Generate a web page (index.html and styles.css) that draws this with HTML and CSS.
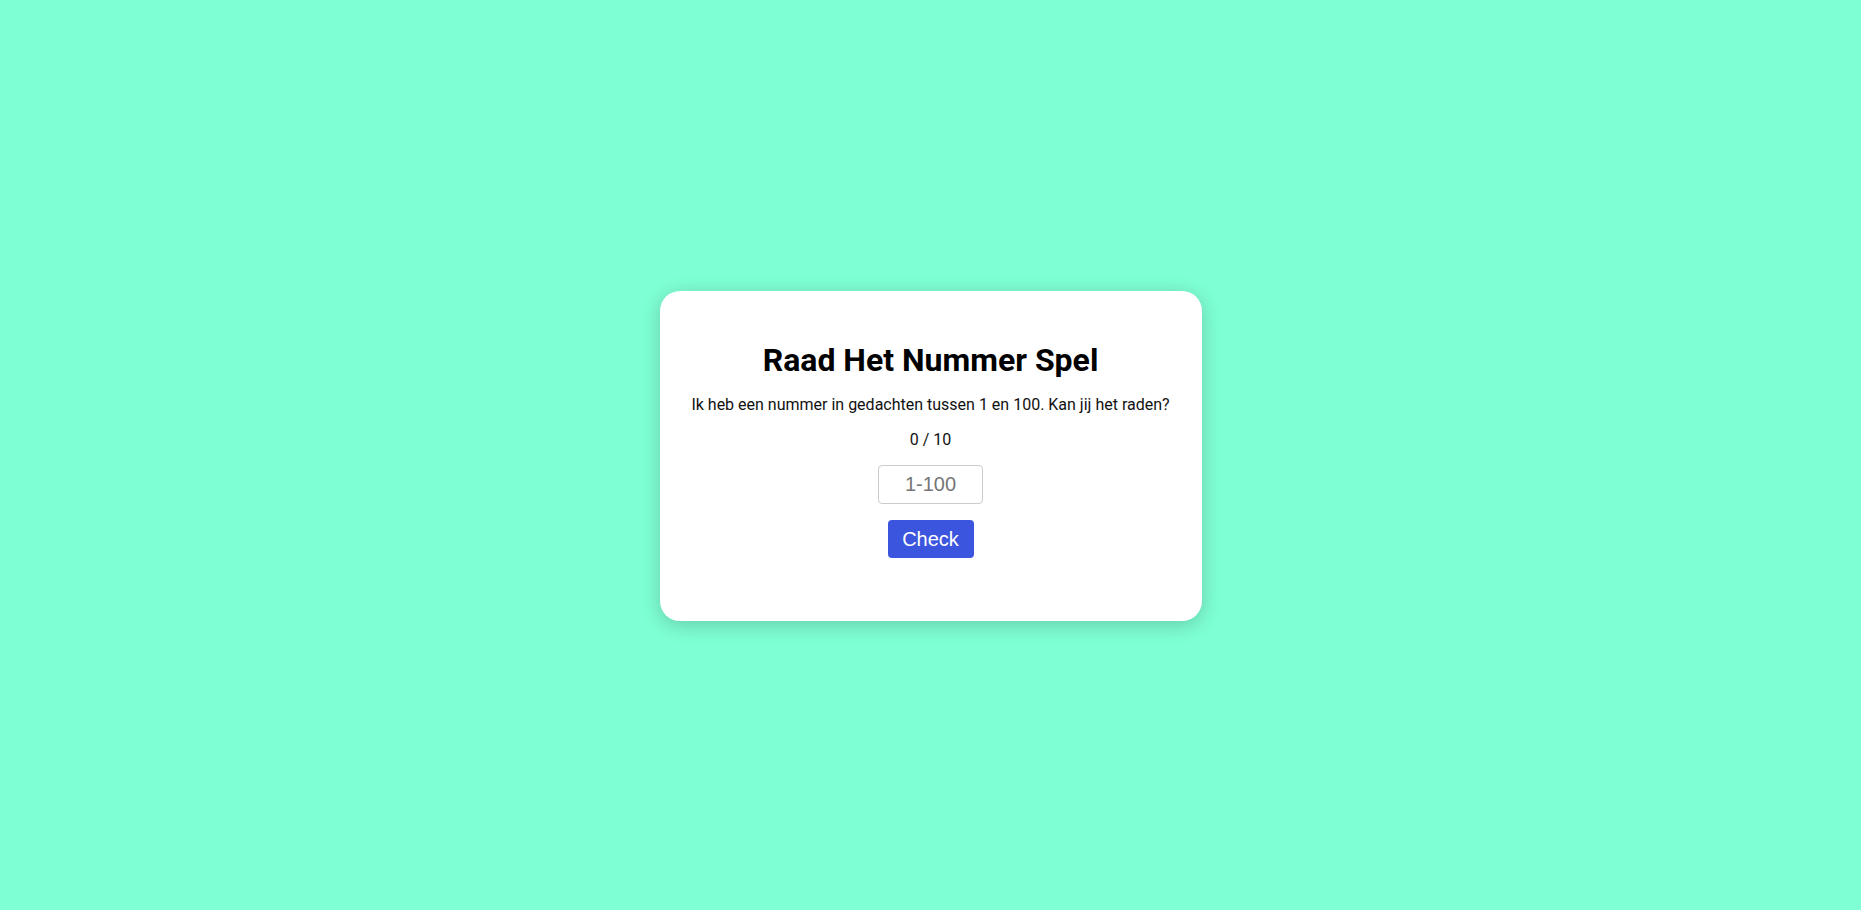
FILE: index.html
```html
<!DOCTYPE html>
<html lang="nl">
<head>
<meta charset="utf-8">
<title>Raad Het Nummer Spel</title>
<link rel="stylesheet" href="styles.css">
</head>
<body>
  <main class="card">
    <h1 class="title">Raad Het Nummer Spel</h1>
    <p class="intro">Ik heb een nummer in gedachten tussen 1 en 100. Kan jij het raden?</p>
    <p class="count">0 / 10</p>
    <input class="guess" type="text" placeholder="1-100">
    <button class="check" type="button">Check</button>
  </main>
</body>
</html>
```
FILE: styles.css
```css
html, body {
  margin: 0;
  padding: 0;
  height: 100%;
}
body {
  background: #7fffd4;
  font-family: Roboto, "Liberation Sans", sans-serif;
  display: flex;
  align-items: center;
  justify-content: center;
}
.card {
  box-sizing: border-box;
  width: 542px;
  height: 330px;
  margin-top: 2px;
  background: #fff;
  border-radius: 20px;
  box-shadow: 0 4px 20px rgba(0, 0, 0, 0.2);
  display: flex;
  flex-direction: column;
  align-items: center;
  padding-top: 51px;
}
.title {
  margin: 0;
  font-size: 32px;
  font-weight: 700;
  color: #000;
  line-height: 37px;
}
.intro {
  margin: 16px 0 0;
  font-size: 16px;
  line-height: 19px;
  color: #111;
}
.count {
  margin: 16px 0 0;
  font-size: 16px;
  line-height: 19px;
  color: #111;
}
.guess {
  margin-top: 16px;
  box-sizing: border-box;
  width: 105px;
  height: 39px;
  border: 1px solid #ccc;
  border-radius: 4px;
  text-align: center;
  font-family: "Liberation Sans", Arial, sans-serif;
  font-size: 20px;
  padding: 0 8px;
  outline: none;
}
.guess::placeholder {
  color: #757575;
}
.check {
  margin-top: 16px;
  box-sizing: border-box;
  width: 86px;
  height: 38px;
  border: none;
  border-radius: 4px;
  background: #3b55de;
  color: #fff;
  font-family: "Liberation Sans", Arial, sans-serif;
  font-size: 20px;
  padding: 0;
  cursor: pointer;
}
```
